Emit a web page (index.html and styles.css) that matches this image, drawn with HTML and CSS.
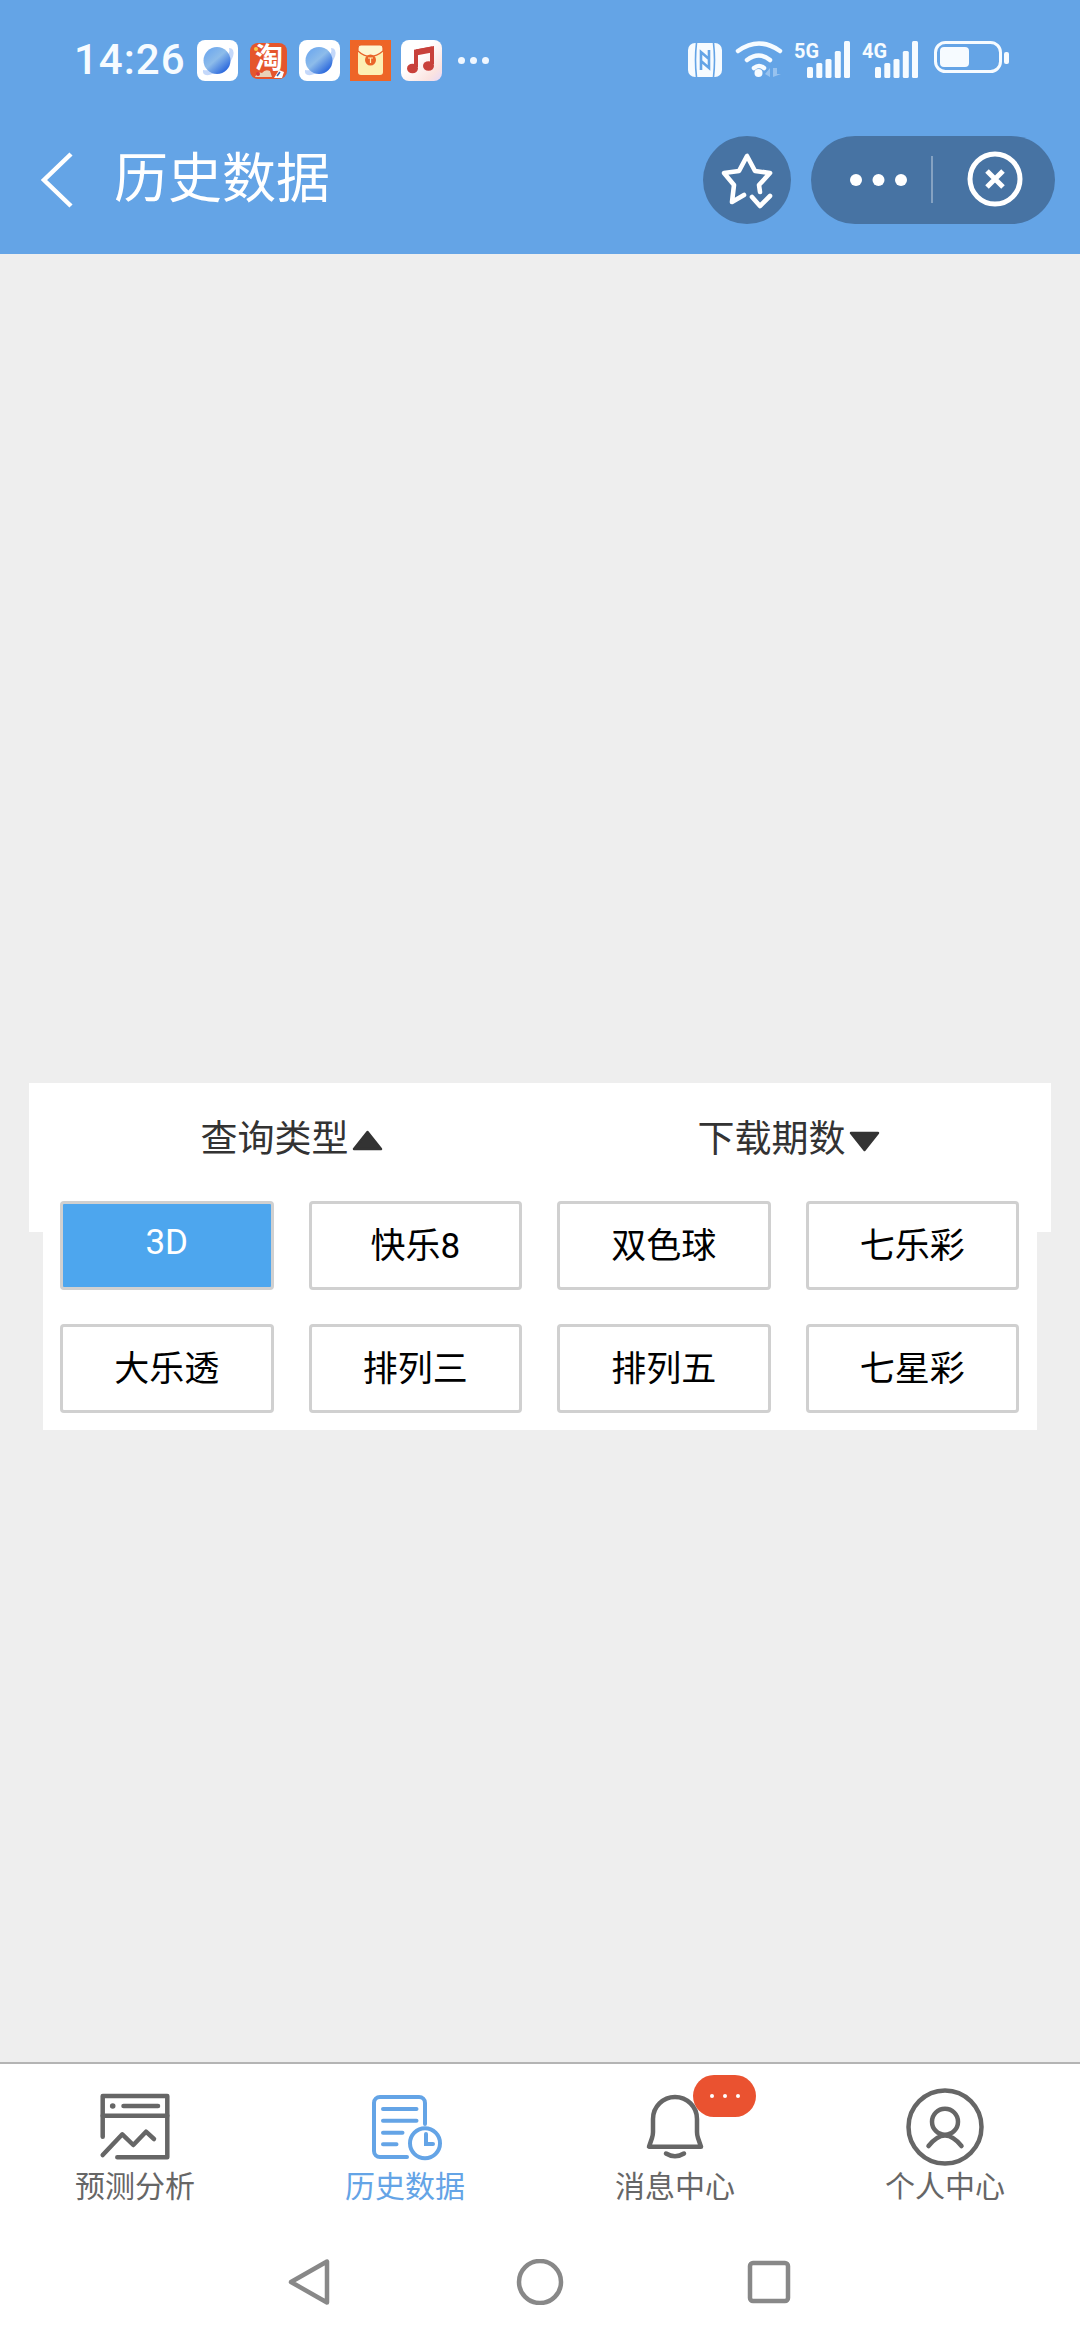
FILE: index.html
```html
<!DOCTYPE html>
<html lang="zh-CN">
  <head>
    <meta charset="UTF-8">
    <meta name="viewport" content="width=device-width">
    <title>历史数据</title>
    <link rel="stylesheet" href="styles.css">
  </head>
  <body>
    <header class="top">
      <!-- Status bar -->
      <div class="status">
        <span class="time">14:26</span>
        <div class="apps">
          <svg class="app" viewBox="0 0 41 41"><use href="#planet"/></svg>
          <svg class="app" viewBox="0 0 41 41">
            <rect x="2" y="3" width="37" height="36" rx="8" fill="#e5552c"/>
            <circle cx="8" cy="9" r="2" fill="#f8c94a"/>
            <text class="app-tao" x="21" y="28">淘</text>
            <path d="M7 37q3-6 7-4 3-4 8-2l2 6z" fill="#e9d3b8"/>
            <path d="M26 38l5-8 5 2-2 6z" fill="#fff"/>
            <path d="M29 36l3-4" stroke="#3d5fa8" stroke-width="1.5"/>
            <circle cx="10" cy="34" r="2" fill="#d83a3a"/>
          </svg>
          <svg class="app" viewBox="0 0 41 41"><use href="#planet"/></svg>
          <svg class="app" viewBox="0 0 41 41">
            <rect width="41" height="41" fill="#ee6527"/>
            <rect x="8" y="5" width="25" height="30" rx="3" fill="#fdefb4"/>
            <path d="M8 11q12 11 25 0V8a3 3 0 0 0-3-3H11a3 3 0 0 0-3 3z" fill="#fdf6d2" stroke="#e8622a" stroke-width="1.2"/>
            <circle cx="20.500" cy="20" r="5.500" fill="#ea6428"/>
            <path d="M18 18h5M20.500 18v5" stroke="#fdefb4" stroke-width="1.200"/>
          </svg>
          <svg class="app" viewBox="0 0 41 41">
            <defs>
              <linearGradient id="musicBg" x1="0" y1="0" x2="1" y2="1">
                <stop offset="0.4" stop-color="#fff"/>
                <stop offset="0.8" stop-color="#fbe3e0"/>
                <stop offset="1" stop-color="#e6d8f8"/>
              </linearGradient>
            </defs>
            <rect width="41" height="41" rx="8" fill="url(#musicBg)"/>
            <path d="M15 27V11.500l16-3V24" fill="none" stroke="#c8413b" stroke-width="4"/>
            <path d="M15 9.500l16-3v6l-16 3z" fill="#c8413b"/>
            <ellipse cx="11.500" cy="28.500" rx="5.500" ry="4.800" fill="#c8413b"/>
            <ellipse cx="27.500" cy="26" rx="5.500" ry="4.800" fill="#c8413b"/>
          </svg>
        </div>
        <div class="more-dots"><i></i><i></i><i></i></div>

        <div class="sys">
          <svg class="sys-nfc" viewBox="0 0 34 34">
            <rect width="34" height="34" rx="7" fill="#f6fbff"/>
            <path d="M8.500 0q-2 17 0 34M25.500 0q2 17 0 34" fill="none" stroke="#64a4e6" stroke-width="1.600"/>
            <path d="M13 27V9l8 7M21 7v18l-8-7" fill="none" stroke="#64a4e6" stroke-width="2.600"/>
          </svg>
          <svg class="sys-wifi" viewBox="0 0 50 40">
            <g fill="none" stroke="#f6fbff" stroke-width="4.500" stroke-linecap="round">
              <path d="M4 11q21-15 42 0"/>
              <path d="M13 20q12-9 23 0"/>
              <path d="M20 28q5-4 10 0"/>
            </g>
            <circle cx="24.500" cy="33" r="4" fill="#f6fbff"/>
            <path d="M31 34l5-6v9zM39 28v9l8-3h-4v-6z" fill="#f6fbff" opacity=".35"/>
          </svg>
          <svg class="sys-signal" viewBox="0 0 58 40">
            <text class="sys-gen" x="2" y="18" textLength="25" lengthAdjust="spacingAndGlyphs">5G</text>
            <g fill="#f6fbff">
              <rect x="15" y="27" width="6" height="11" rx="1.500"/>
              <rect x="24.300" y="23" width="6" height="15" rx="1.500"/>
              <rect x="33.500" y="19" width="6" height="19" rx="1.500"/>
              <rect x="42.800" y="11" width="6" height="27" rx="1.500"/>
              <rect x="52" y="1" width="6" height="37" rx="1.500"/>
            </g>
          </svg>
          <svg class="sys-signal" viewBox="0 0 58 40">
            <text class="sys-gen" x="2" y="18" textLength="25" lengthAdjust="spacingAndGlyphs">4G</text>
            <g fill="#f6fbff">
              <rect x="15" y="27" width="6" height="11" rx="1.500"/>
              <rect x="24.300" y="23" width="6" height="15" rx="1.500"/>
              <rect x="33.500" y="19" width="6" height="19" rx="1.500"/>
              <rect x="42.800" y="11" width="6" height="27" rx="1.500"/>
              <rect x="52" y="1" width="6" height="37" rx="1.500"/>
            </g>
          </svg>
          <svg class="sys-battery" viewBox="0 0 75 40">
            <rect x="1.500" y="2.500" width="65" height="29" rx="10" fill="none" stroke="#f6fbff" stroke-width="3"/>
            <rect x="6" y="7" width="29" height="20" rx="4" fill="#f6fbff"/>
            <rect x="70" y="12" width="5" height="12" rx="2" fill="#f6fbff"/>
          </svg>
        </div>
      </div>

      <!-- Navigation bar -->
      <nav class="nav">
        <svg class="nav-back" viewBox="0 0 34 56">
          <path d="M31 2L4 28l27 26" fill="none" stroke="#fff" stroke-width="4.500"/>
        </svg>
        <h1 class="nav-title">历史数据</h1>
        <div class="nav-tools">
          <div class="fav">
            <svg viewBox="0 0 88 88">
              <g fill="none" stroke="#fff" stroke-width="4.600" stroke-linecap="round" stroke-linejoin="round">
                <path d="M57 56L56 49 67 37 52 35 44 20 36 35 21 37 31 49 29 66 41 59"/>
                <path d="M49 61L57 70 67 60"/>
              </g>
            </svg>
          </div>
          <div class="capsule">
            <svg viewBox="0 0 244 88">
              <g fill="#fff">
                <circle cx="45" cy="44" r="6"/>
                <circle cx="67.500" cy="44" r="6"/>
                <circle cx="90" cy="44" r="6"/>
              </g>
              <path d="M121 20v47" stroke="#fff" stroke-opacity=".45" stroke-width="1.500"/>
              <circle cx="184" cy="43" r="25" fill="none" stroke="#fff" stroke-width="5"/>
              <path d="M176 35l16 16M192 35l-16 16" stroke="#fff" stroke-width="5"/>
            </svg>
          </div>
        </div>
      </nav>
    </header>

    <main class="content">
      <div class="filter">
        <div class="filter-col">
          <span>查询类型</span>
          <svg class="caret" viewBox="0 0 31 21"><path d="M15.500 2L29 19H2z" fill="#333" stroke="#333" stroke-width="2.500" stroke-linejoin="round"/></svg>
        </div>
        <div class="filter-col">
          <span>下载期数</span>
          <svg class="caret caret-down" viewBox="0 0 31 21"><path d="M15.500 19L29 2H2z" fill="#333" stroke="#333" stroke-width="2.500" stroke-linejoin="round"/></svg>
        </div>
      </div>
      <div class="types">
        <button class="type type-on" type="button">3D</button>
        <button class="type" type="button">快乐8</button>
        <button class="type" type="button">双色球</button>
        <button class="type" type="button">七乐彩</button>
        <button class="type" type="button">大乐透</button>
        <button class="type" type="button">排列三</button>
        <button class="type" type="button">排列五</button>
        <button class="type" type="button">七星彩</button>
      </div>
    </main>

    <footer class="bottom">
      <div class="tabs">
        <div class="tab">
          <svg class="tab-icon" viewBox="0 0 80 80">
            <g fill="none" stroke="currentColor" stroke-width="4.500" stroke-linecap="round" stroke-linejoin="round">
              <path d="M7.700 48.700V8H72.300V69.300H22.300"/>
              <path d="M7.700 27.700H72.300"/>
              <path d="M28.500 18H63"/>
              <path d="M7.700 67L27.300 46.300 38.300 57 51 43.700 59 51"/>
            </g>
            <circle cx="17.700" cy="18" r="2.800" fill="currentColor"/>
          </svg>
          <span class="tab-label">预测分析</span>
        </div>
        <div class="tab tab-on">
          <svg class="tab-icon" viewBox="0 0 80 80">
            <g fill="none" stroke="currentColor" stroke-width="4" stroke-linecap="round">
              <path d="M42 69H15a6 6 0 0 1-6-6V15a6 6 0 0 1 6-6H54a6 6 0 0 1 6 6V36"/>
              <path d="M18 21H51.500M18 32.700H51.500M18 44.700H37.500M18 56.300H31.500"/>
              <circle cx="60" cy="55.300" r="15"/>
              <path d="M61 46V56H68"/>
            </g>
          </svg>
          <span class="tab-label">历史数据</span>
        </div>
        <div class="tab">
          <svg class="tab-icon" viewBox="0 0 80 80">
            <g fill="none" stroke="currentColor" stroke-width="4.500" stroke-linecap="round" stroke-linejoin="round">
              <path d="M14 58.700H66L63 50Q62 47 62 44V31A22 22 0 0 0 18 31V44Q18 47 17 50Z"/>
              <path d="M31 65.500Q40 71 49 65.500"/>
            </g>
          </svg>
          <span class="tab-label">消息中心</span>
          <span class="badge"><i></i><i></i><i></i></span>
        </div>
        <div class="tab">
          <svg class="tab-icon" viewBox="0 0 80 80">
            <g fill="none" stroke="currentColor" stroke-width="4.500" stroke-linecap="round">
              <circle cx="40" cy="39" r="36.500"/>
              <circle cx="40" cy="33.700" r="13"/>
              <path d="M23.500 58Q32 47.500 40 47.500T56.500 58"/>
            </g>
          </svg>
          <span class="tab-label">个人中心</span>
        </div>
      </div>

      <!-- System keys -->
      <div class="keys">
        <svg class="key" viewBox="0 0 60 46"><path d="M11 23L47 2.500V43.500Z"/></svg>
        <svg class="key" viewBox="0 0 60 46"><circle cx="30" cy="23" r="21"/></svg>
        <svg class="key" viewBox="0 0 60 46"><rect x="10" y="4" width="38" height="38" rx="3"/></svg>
      </div>
    </footer>

    <svg class="defs" width="0" height="0">
      <defs>
        <linearGradient id="planetFill" x1="0.150" y1="0.100" x2="0.850" y2="0.900">
          <stop offset="0" stop-color="#6fa9ee"/>
          <stop offset="0.450" stop-color="#8dbcea"/>
          <stop offset="1" stop-color="#2563dc"/>
        </linearGradient>
        <g id="planet">
          <rect width="41" height="41" rx="8" fill="#fff"/>
          <path d="M6 30q-1 6 6 5 12-2 21-13 5-7 3-12-1-2-4-2 2 5-6 14-9 10-20 8z" fill="#c4d8fa"/>
          <circle cx="20" cy="20.500" r="13.500" fill="url(#planetFill)"/>
        </g>
      </defs>
    </svg>
  </body>
</html>
```

FILE: styles.css
```css
* {
  box-sizing: border-box;
}
html, body {
  margin: 0;
  height: 100%;
}
body {
  display: flex;
  flex-direction: column;
  width: 1080px;
  height: 2340px;
  background: #eee;
  font-family: Roboto, "Noto Sans CJK SC", sans-serif;
}
svg {
  display: block;
}
.defs {
  position: absolute;
}

/* Top */
.top {
  height: 254px;
  padding-top: 30px;
  background: #64a4e6;
  color: #fff;
}
.status {
  display: flex;
  align-items: center;
  height: 60px;
  padding: 0 71px 0 74px;
}
.time {
  width: 123px;
  color: #f6fbff;
  font-size: 42px;
  font-weight: 500;
  letter-spacing: 1px;
  line-height: 60px;
}
.apps {
  display: flex;
  gap: 10px;
}
.app {
  width: 41px;
  height: 41px;
}
.app-tao {
  fill: #fff;
  font-size: 28px;
  font-weight: 700;
  text-anchor: middle;
}
.more-dots {
  display: flex;
  gap: 5px;
  margin-left: 16px;
}
.more-dots i {
  width: 7px;
  height: 7px;
  border-radius: 50%;
  background: #f0f7ff;
}
.sys {
  display: flex;
  align-items: center;
  gap: 10px;
  margin-left: auto;
}
.sys-nfc {
  width: 34px;
  height: 34px;
  margin-right: 2px;
}
.sys-wifi {
  width: 50px;
  height: 40px;
  margin-right: -2px;
}
.sys-signal {
  width: 58px;
  height: 40px;
}
.sys-battery {
  width: 75px;
  height: 40px;
  margin-left: 6px;
}
.sys-gen {
  fill: #f6fbff;
  font-size: 21px;
  font-weight: 700;
}

.nav {
  display: flex;
  align-items: center;
  height: 88px;
  margin-top: 46px;
  padding: 0 25px 0 40px;
}
.nav-back {
  width: 34px;
  height: 56px;
}
.nav-title {
  margin: 0 0 0 40px;
  font-size: 54px;
  font-weight: 400;
  line-height: 60px;
}
.nav-tools {
  display: flex;
  gap: 20px;
  margin-left: auto;
}
.fav {
  width: 88px;
  height: 88px;
  border-radius: 50%;
  background: #4773a3;
}
.capsule {
  width: 244px;
  height: 88px;
  border-radius: 44px;
  background: #4773a3;
}

/* Content */
.content {
  flex: 1;
  padding-top: 829px;
}
.filter {
  display: flex;
  height: 149px;
  margin: 0 29px;
  padding: 31px 14px 0;
  background: #fff;
  color: #333;
  font-size: 37px;
  line-height: 52px;
}
.filter-col {
  display: flex;
  flex: 1;
  justify-content: center;
  align-items: center;
  gap: 3px;
  height: 52px;
}
.caret {
  width: 31px;
  height: 21px;
}
.caret-down {
  margin-top: 3px;
}
.types {
  display: grid;
  grid-template-columns: repeat(4, 1fr);
  gap: 34px 35px;
  margin: -31px 43px 0;
  padding: 0 18px 17px 17px;
  background: #fff;
}
.type {
  height: 89px;
  padding: 0 0 7px;
  border: 3px solid #d0d0d0;
  border-radius: 4px;
  background: #fff;
  color: #000;
  font-family: inherit;
  font-size: 35px;
}
.type-on {
  background: #4da6ee;
  color: #fff;
}

/* Tabs */
.bottom {
  height: 278px;
  border-top: 2px solid #b4b4b4;
  background: #fff;
}
.tabs {
  display: grid;
  grid-template-columns: repeat(4, 1fr);
  padding-top: 24px;
}
.tab {
  position: relative;
  display: flex;
  flex-direction: column;
  align-items: center;
  color: #666;
}
.tab-on {
  color: #64a4e6;
}
.tab-icon {
  width: 80px;
  height: 80px;
}
.tab-label {
  margin-top: 4px;
  font-size: 30px;
  line-height: 30px;
}
.badge {
  position: absolute;
  top: -13px;
  left: 153px;
  display: flex;
  justify-content: center;
  align-items: center;
  gap: 9px;
  width: 63px;
  height: 42px;
  border-radius: 21px;
  background: #ea5230;
}
.badge i {
  width: 4px;
  height: 4px;
  border-radius: 50%;
  background: #fff;
}
.keys {
  display: flex;
  justify-content: center;
  gap: 170px;
  padding-top: 57px;
}
.key {
  width: 60px;
  height: 46px;
  fill: none;
  stroke: #888;
  stroke-width: 4.500;
  stroke-linejoin: round;
}
```
